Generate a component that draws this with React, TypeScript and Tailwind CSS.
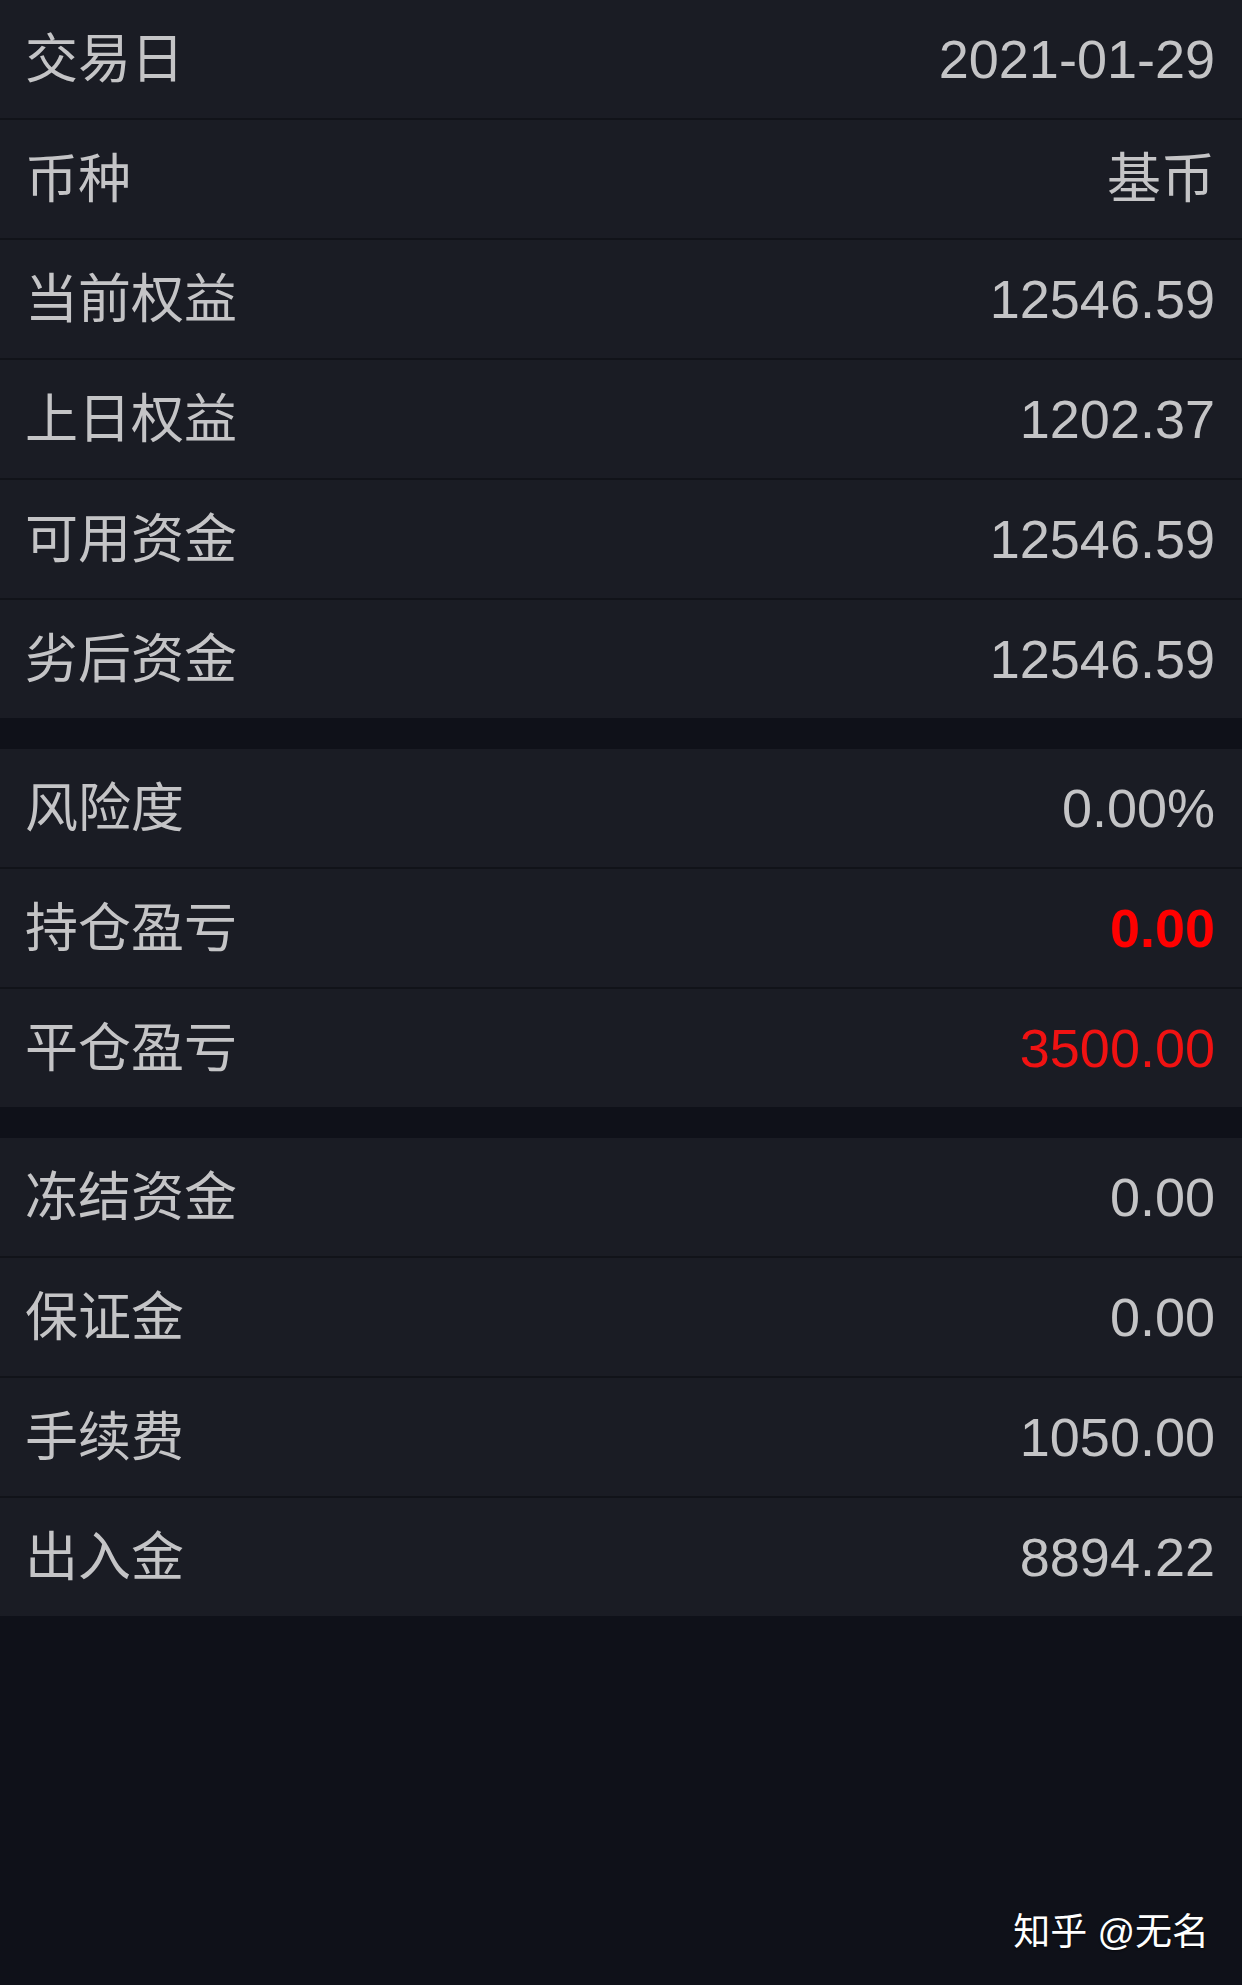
const sections: { label: string; value: string; tone?: "bold" | "red" }[][] = [
  [
    { label: "交易日", value: "2021-01-29" },
    { label: "币种", value: "基币" },
    { label: "当前权益", value: "12546.59" },
    { label: "上日权益", value: "1202.37" },
    { label: "可用资金", value: "12546.59" },
    { label: "劣后资金", value: "12546.59" },
  ],
  [
    { label: "风险度", value: "0.00%" },
    { label: "持仓盈亏", value: "0.00", tone: "bold" },
    { label: "平仓盈亏", value: "3500.00", tone: "red" },
  ],
  [
    { label: "冻结资金", value: "0.00" },
    { label: "保证金", value: "0.00" },
    { label: "手续费", value: "1050.00" },
    { label: "出入金", value: "8894.22" },
  ],
];

function Row({ label, value, tone, last }: { label: string; value: string; tone?: "bold" | "red"; last: boolean }) {
  const valueClass =
    tone === "bold"
      ? "font-bold text-[#ff0000]"
      : tone === "red"
        ? "text-[#f01212]"
        : "text-[#c4c4c6]";
  return (
    <div
      className={`flex items-center justify-between bg-[#1a1c24] pl-[25px] pr-[27px] ${
        last ? "h-[118px]" : "h-[120px] border-b-2 border-[#111319]"
      }`}
    >
      <span className="text-[53px] leading-none text-[#c4c4c6]">{label}</span>
      <span className={`text-[54px] leading-none ${valueClass}`}>{value}</span>
    </div>
  );
}

export default function App() {
  return (
    <div
      className="relative min-h-[1985px] w-full bg-[#0f1119]"
      style={{ fontFamily: '"Liberation Sans", "Noto Sans CJK SC", sans-serif' }}
    >
      <div className="flex flex-col gap-[31px]">
        {sections.map((rows, i) => (
          <div key={i} className="flex flex-col">
            {rows.map((r, j) => (
              <Row key={r.label} {...r} last={j === rows.length - 1} />
            ))}
          </div>
        ))}
      </div>
      <div className="absolute bottom-[34px] right-[33px] text-[37px] leading-none text-white [text-shadow:0_1px_2px_rgba(0,0,0,0.6)]">
        知乎 @无名
      </div>
    </div>
  );
}
